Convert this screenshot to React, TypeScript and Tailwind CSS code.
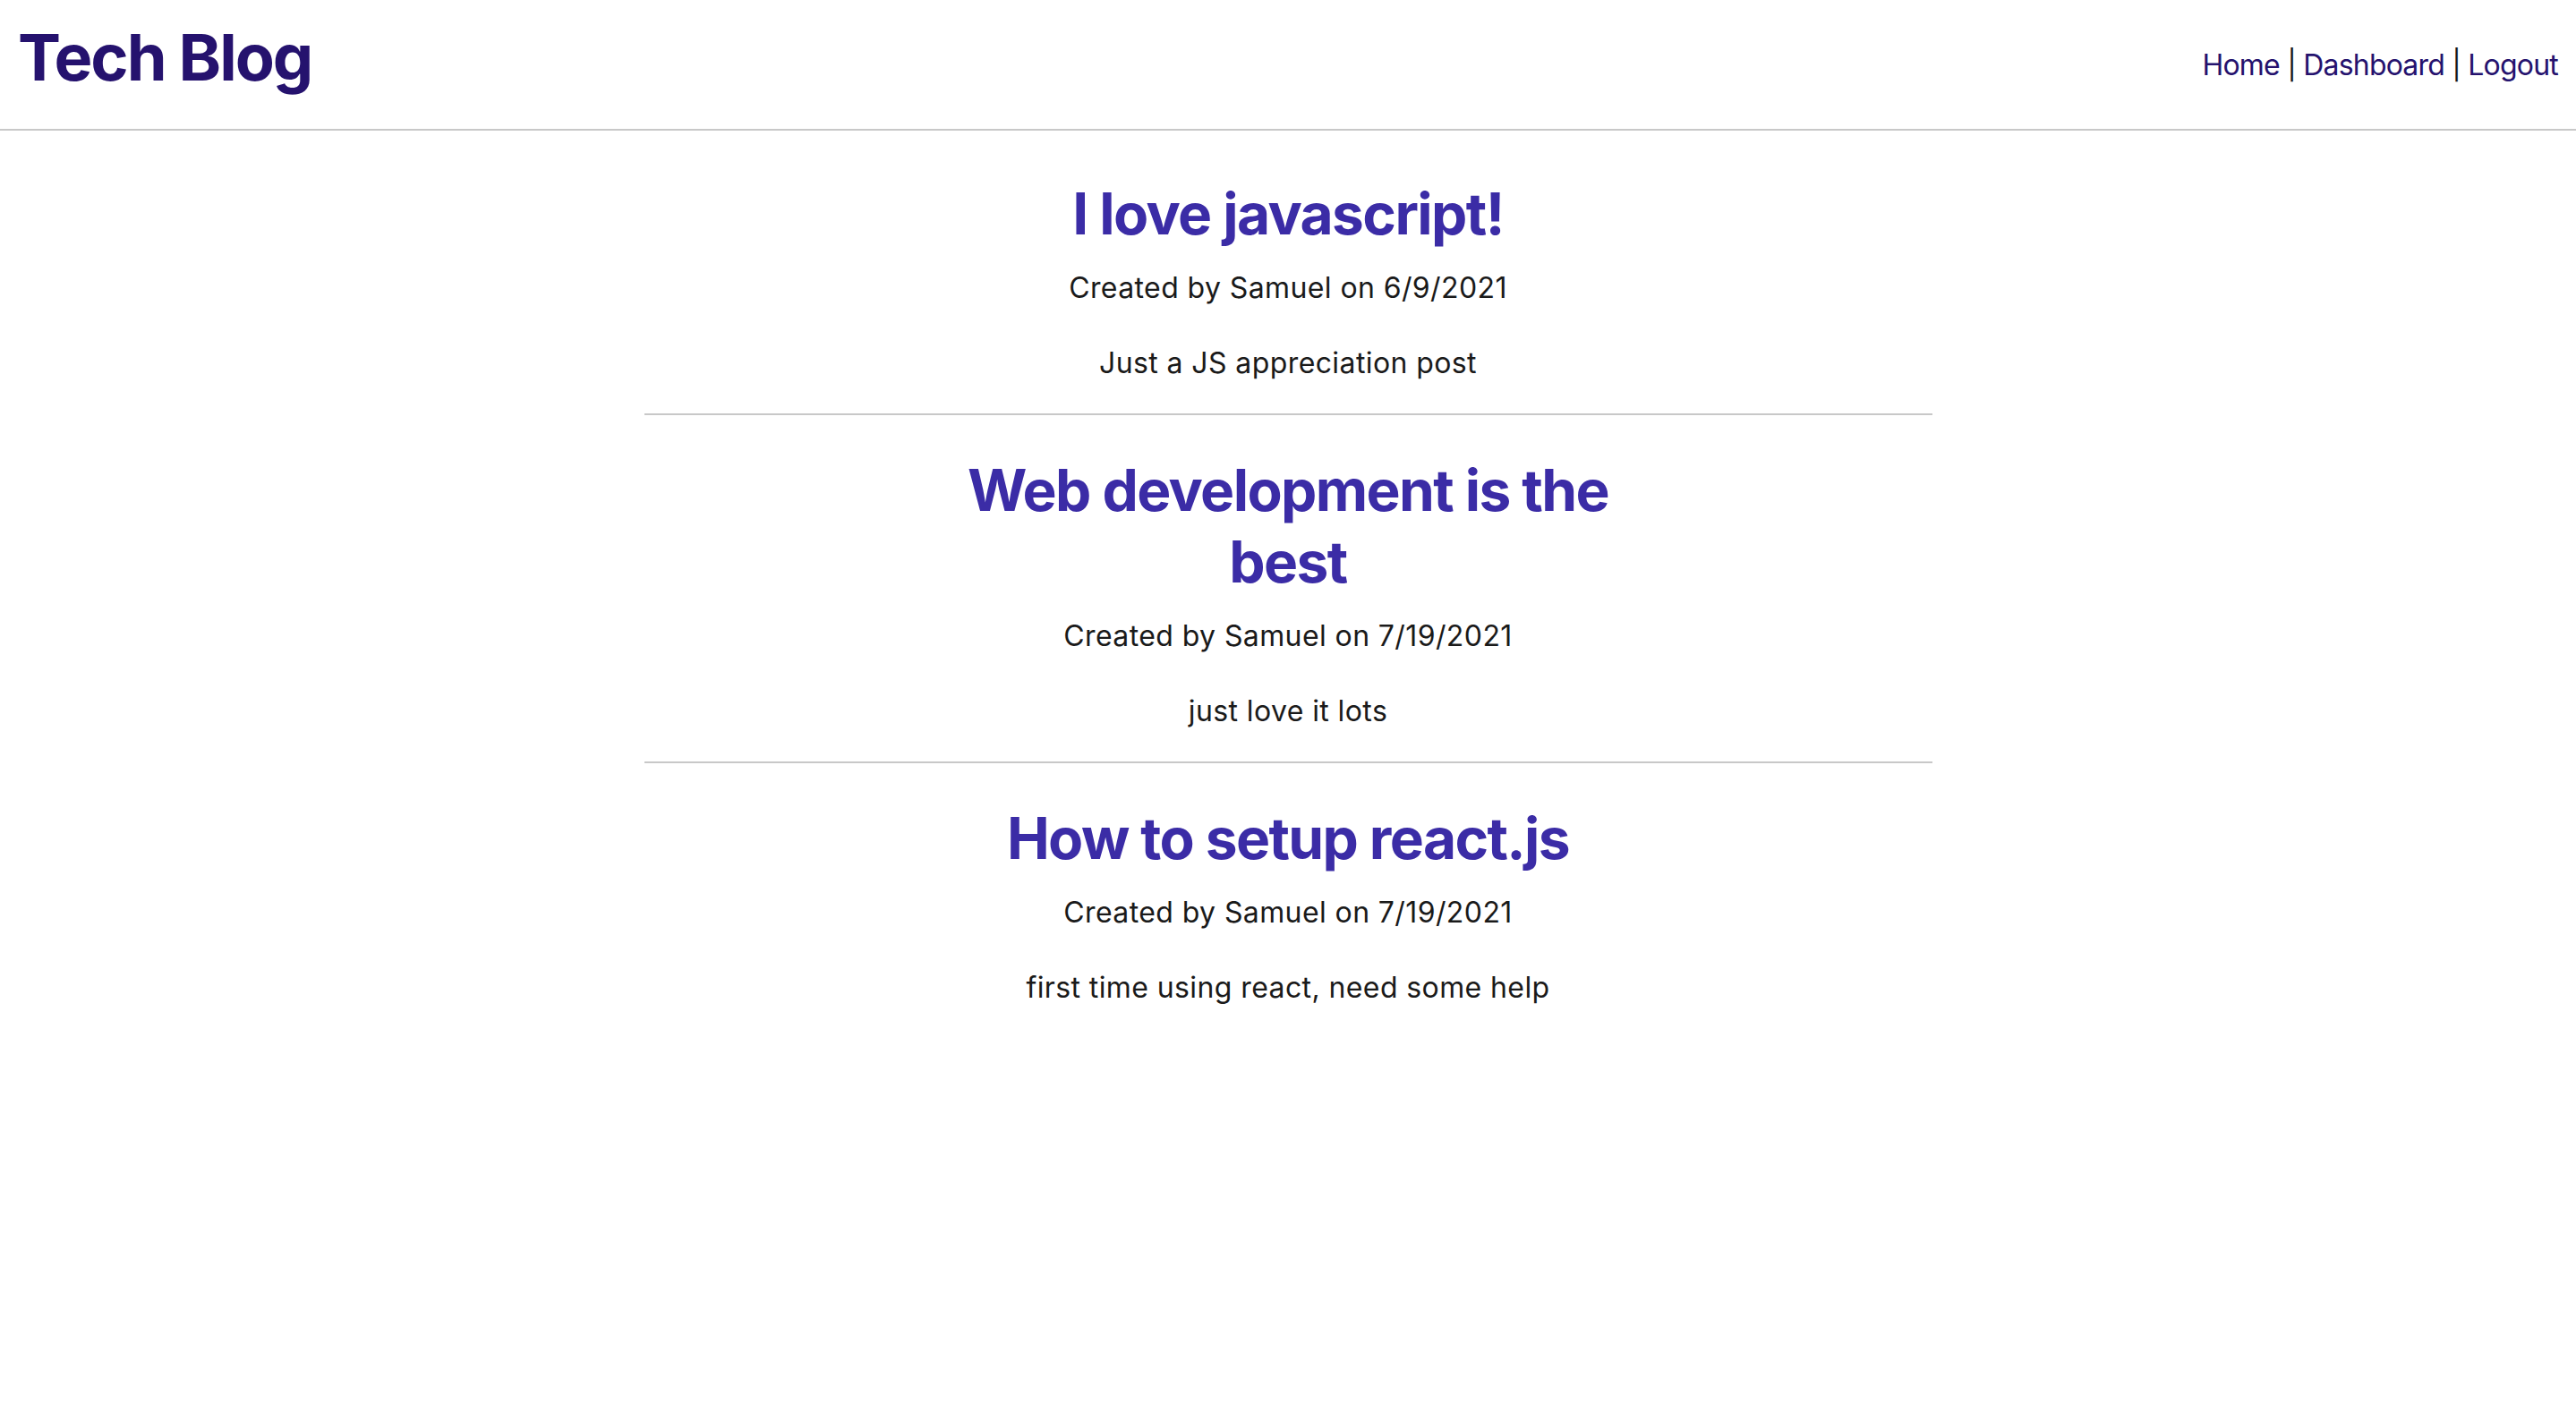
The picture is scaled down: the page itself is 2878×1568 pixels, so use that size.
const posts = [
    { id: 1, title: 'I love javascript!', author: 'Samuel', date: '6/9/2021', body: 'Just a JS appreciation post' },
    { id: 2, title: 'Web development is the best', author: 'Samuel', date: '7/19/2021', body: 'just love it lots' },
    { id: 3, title: 'How to setup react.js', author: 'Samuel', date: '7/19/2021', body: 'first time using react, need some help' },
];

export default function App() {
    return (
        <div className="min-h-screen bg-white font-['Inter','Liberation_Sans',sans-serif] text-[#1a1a1a]">
            <header className="flex justify-between items-start px-[20px] pt-[20px] pb-[37px] border-b-2 border-[#c8c8c8]">
                <h1 className="text-[72px] font-bold leading-[87px] text-[#25126e] tracking-[-2px]">Tech Blog</h1>
                <nav className="mt-[33px] text-[32px] leading-[39px] tracking-[-0.8px] text-[#1a1a1a]">
                    <a href="#" className="text-[#25126e]">Home</a>
                    {' | '}
                    <a href="#" className="text-[#25126e]">Dashboard</a>
                    {' | '}
                    <a href="#" className="text-[#25126e]">Logout</a>
                </nav>
            </header>

            <main className="flex flex-col items-center pt-[53px]">
                {posts.map((post, i) => (
                    <article key={post.id} className="w-1/2 flex flex-col items-center text-center">
                        <h2 className="max-w-[740px] text-[64px] leading-[80px] font-bold tracking-[-1.6px] text-[#3b2ca6]">
                            {post.title}
                        </h2>
                        <p className="mt-[19px] text-[32px] leading-[48px] tracking-[0.4px]">
                            Created by {post.author} on {post.date}
                        </p>
                        <p className="mt-[36px] text-[32px] leading-[48px] tracking-[0.4px]">{post.body}</p>
                        {i < posts.length - 1 && (
                            <hr className="w-full mt-[32px] mb-[44px] border-0 h-[2px] bg-[#c8c8c8]" />
                        )}
                    </article>
                ))}
            </main>
        </div>
    );
}
